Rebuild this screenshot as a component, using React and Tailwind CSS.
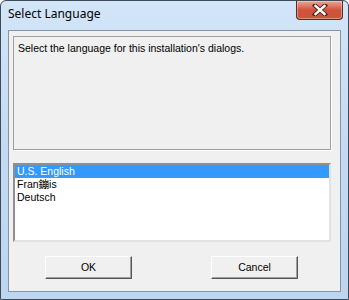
export default function App() {
  const items = ["U.S. English", "Fran鏰is", "Deutsch"];
  const selected = 0;

  return (
    <div className="w-[349px] h-[300px] bg-white overflow-hidden">
      <div className="w-[349px] h-[300px] flex flex-col border border-[#3f4a58] rounded-t-[6px] bg-gradient-to-b from-[#d3e5f8] via-[#c3daf2] to-[#bdd5ef] px-[7px] pb-[7px]">
        {/* title bar */}
        <div className="h-[29px] flex items-start justify-between shrink-0">
          <span
            className="pt-[5px] text-[12px] leading-[16px] text-black"
            style={{ fontFamily: '"Noto Sans", "Open Sans", sans-serif' }}
          >
            Select Language
          </span>
          <div className="mr-[-2px] w-[47px] h-[19px] rounded-b-[4px] border border-t-0 border-[#5b2a22] bg-gradient-to-b from-[#e7a597] via-[#d2513a] to-[#c8563e] flex items-center justify-center shadow-[inset_0_0_0_1px_rgba(255,255,255,0.35)]">
            <svg width="16" height="12" viewBox="0 0 16 12">
              <path
                d="M3 1.5 L13 10.5 M13 1.5 L3 10.5"
                stroke="#4a2019"
                strokeWidth="4.2"
                strokeLinecap="square"
              />
              <path
                d="M3.5 2 L12.5 10 M12.5 2 L3.5 10"
                stroke="#ffffff"
                strokeWidth="2.4"
                strokeLinecap="square"
              />
            </svg>
          </div>
        </div>

        {/* client area */}
        <div
          className="flex-1 bg-[#f0f0f0] border border-[#8395aa] pl-[4px] pr-[9px] pt-[5px] text-[10.5px] leading-[13px] text-black"
          style={{ fontFamily: '"Liberation Sans", Arial, "Noto Sans CJK SC", sans-serif' }}
        >
          <div className="h-[114px] border border-[#a0a0a0] shadow-[1px_1px_0_#ffffff] pl-[4px] pt-[5px]">
            Select the language for this installation's dialogs.
          </div>

          <div className="mt-[13px] h-[79px] bg-white border-2 border-t-[#8f8f8f] border-l-[#8f8f8f] border-b-[#e3e3e3] border-r-[#e3e3e3]">
            {items.map((item, i) => (
              <div
                key={item}
                className={
                  i === selected
                    ? "h-[13px] pl-[2px] bg-[#3399ff] text-white outline outline-1 outline-dotted outline-[#d07a30] -outline-offset-1"
                    : "h-[13px] pl-[2px]"
                }
              >
                {item}
              </div>
            ))}
          </div>

          <div className="mt-[14px] flex">
            <button className="ml-[32px] w-[87px] h-[23px] bg-[#f0f0f0] border border-t-white border-l-white border-b-[#555555] border-r-[#555555] shadow-[inset_-1px_-1px_0_#a0a0a0] text-[10.5px] leading-[13px]">
              OK
            </button>
            <button className="ml-[79px] w-[87px] h-[23px] bg-[#f0f0f0] border border-t-white border-l-white border-b-[#555555] border-r-[#555555] shadow-[inset_-1px_-1px_0_#a0a0a0] text-[10.5px] leading-[13px]">
              Cancel
            </button>
          </div>
        </div>
      </div>
    </div>
  );
}
